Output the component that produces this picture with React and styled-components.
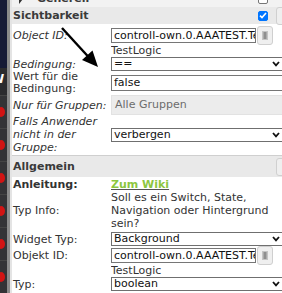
import React from "react";
import styled, { createGlobalStyle } from "styled-components";

const Global = createGlobalStyle`
  html, body {
    margin: 0;
    padding: 0;
    overflow: hidden;
    background: #ffffff;
    font-family: "DejaVu Sans", Verdana, sans-serif;
  }
`;

const Page = styled.div`
  position: relative;
  display: flex;
  width: 282px;
  height: 293px;
  overflow: hidden;
  background: #fff;
`;

const Strip = styled.div`
  flex: 0 0 7px;
  display: flex;
  flex-direction: column;
  overflow: hidden;
`;

const StripTop = styled.div`
  height: 68px;
  background: #161a36;
`;

const StripLetter = styled.div`
  height: 27px;
  background: #2b2b2e;
  color: #fff;
  font-weight: bold;
  font-size: 12px;
  line-height: 12px;
  padding-top: 5px;
  box-sizing: border-box;
  text-indent: -9px;
  white-space: nowrap;
`;

const StripRow = styled.div`
  height: 33px;
  background: #333336;
  border-top: 1px solid #444;
  box-sizing: border-box;
  display: flex;
  align-items: center;
`;

const Dot = styled.div`
  width: 8px;
  height: 10px;
  margin-left: -3px;
  border-radius: 50%;
  background: #d21414;
`;

const Divider = styled.div`
  flex: 0 0 3px;
  background: #8a8a8a;
  border-right: 2px solid #e4e4e4;
`;

const Panel = styled.div`
  flex: 0 0 290px;
  margin-top: -10px;
  color: #333;
  font-size: 11px;
`;

const Head = styled.div`
  display: flex;
  align-items: center;
  height: ${(p) => p.$h}px;
  box-sizing: border-box;
  padding-left: 1px;
  background: ${(p) => (p.$muted ? "#f2f2f2" : "#e9e9e9")};
  border-top: ${(p) => (p.$line ? "1px solid #cfcfcf" : "none")};
  font-weight: bold;
  color: #3a3a3a;
`;

const HeadTitle = styled.span`
  flex: 1;
  display: flex;
  align-items: center;
  gap: 13px;
`;

const Box = styled.span`
  width: 10px;
  height: 10px;
  box-sizing: border-box;
  border-radius: 2px;
  border: 1px solid ${(p) => (p.$on ? "#0075ff" : "#767676")};
  background: ${(p) => (p.$on ? "#0075ff" : "#fff")};
  display: flex;
  align-items: center;
  justify-content: center;
`;

const HeadBtn = styled.span`
  width: 20px;
  height: 18px;
  margin: 0 6px 0 8px;
  box-sizing: border-box;
  border: 1px solid #d0d0d0;
  border-radius: 3px;
  background: #efefef;
  visibility: ${(p) => (p.$hidden ? "hidden" : "visible")};
`;

const Row = styled.div`
  display: grid;
  grid-template-columns: 99px 175px;
  align-items: ${(p) => (p.$top ? "start" : "center")};
  padding: ${(p) => p.$pad || "0"};
`;

const Label = styled.div`
  font-style: ${(p) => (p.$italic ? "italic" : "normal")};
  font-weight: ${(p) => (p.$bold ? "bold" : "normal")};
  line-height: ${(p) => p.$lh || 13}px;
  padding-top: ${(p) => p.$pt || 0}px;
  padding-left: 1px;
  color: #333;
`;

const Value = styled.div`
  min-width: 0;
  overflow: hidden;
`;

const InputLine = styled.div`
  display: flex;
  align-items: center;
  height: 19px;
`;

const Input = styled.div`
  flex: ${(p) => (p.$w ? `0 0 ${p.$w}px` : "1")};
  height: ${(p) => p.$h || 15}px;
  box-sizing: border-box;
  border: 1px solid #767676;
  padding: 0 2px;
  font-size: 11px;
  line-height: ${(p) => (p.$h || 15) - 2}px;
  color: #111;
  white-space: nowrap;
  overflow: hidden;
`;

const PickBtn = styled.div`
  flex: 0 0 16px;
  height: 19px;
  margin-left: 1px;
  box-sizing: border-box;
  border: 1px solid #cfcfcf;
  border-radius: 3px;
  background: #efefef;
  display: flex;
  align-items: center;
  justify-content: center;
`;

const Note = styled.div`
  line-height: 12px;
  color: #333;
  white-space: nowrap;
`;

const Select = styled.div`
  display: flex;
  align-items: center;
  height: 14px;
  box-sizing: border-box;
  border: 1px solid #6f6f6f;
  padding: 0 5px 0 2px;
  color: #111;
  line-height: 12px;
  background: ${(p) => (p.$disabled ? "#ececec" : "#fff")};
  ${(p) =>
    p.$disabled &&
    `
    height: 20px;
    border-color: #e2e2e2;
    color: #6d6d6d;
    padding-left: 3px;
  `}
  span {
    flex: 1;
    white-space: nowrap;
  }
`;

const Link = styled.a`
  color: #8cc63f;
  font-weight: bold;
  text-decoration: underline;
  text-decoration-color: #555;
  line-height: 13px;
`;

const Text = styled.div`
  line-height: 13px;
  color: #333;
`;

const ArrowMark = styled.svg`
  position: absolute;
  left: 0;
  top: 0;
  pointer-events: none;
`;

function Chevron() {
  return (
    <svg width="8" height="6" viewBox="0 0 8 6">
      <path d="M1 1 L4 4.3 L7 1" fill="none" stroke="#111" strokeWidth="1.8" />
    </svg>
  );
}

function Drop({ children, disabled }) {
  return (
    <Select $disabled={disabled}>
      <span>{children}</span>
      {!disabled && <Chevron />}
    </Select>
  );
}

function IdField({ value }) {
  return (
    <>
      <InputLine>
        <Input $w={145}>{value}</Input>
        <PickBtn>
          <svg width="6" height="9" viewBox="0 0 6 9">
            <rect x="0" y="0" width="6" height="9" fill="#c4c4c4" />
            <rect x="1.5" y="1" width="3" height="7" fill="#8f8f8f" />
          </svg>
        </PickBtn>
      </InputLine>
      <Note>TestLogic</Note>
    </>
  );
}

export default function App() {
  const id = "controll-own.0.AAATEST.TestLogic";
  return (
    <Page>
      <Global />
      <Strip>
        <StripTop />
        <StripLetter>W</StripLetter>
        {[0, 1, 2, 3, 4, 5].map((i) => (
          <StripRow key={i}>
            <Dot />
          </StripRow>
        ))}
      </Strip>
      <Divider />
      <Panel>
        <Head $h={17} $muted>
          <HeadTitle>
            <svg width="6" height="10" viewBox="0 0 6 10" style={{ marginLeft: 5 }}>
              <path d="M1 0 L5 5 L1 10 Z" fill="#333" />
            </svg>
            Generell
          </HeadTitle>
          <Box />
          <HeadBtn $hidden />
        </Head>
        <Head $h={17}>
          <HeadTitle>Sichtbarkeit</HeadTitle>
          <Box $on>
            <svg width="8" height="7" viewBox="0 0 8 7">
              <path d="M1 3.6 L3 5.6 L7 1" fill="none" stroke="#fff" strokeWidth="1.6" />
            </svg>
          </Box>
          <HeadBtn />
        </Head>

        <Row $top $pad="2px 0 0 0">
          <Label $italic $pt={3}>Object ID:</Label>
          <Value>
            <IdField value={id} />
          </Value>
        </Row>
        <Row>
          <Label $italic>Bedingung:</Label>
          <Value>
            <Drop>==</Drop>
          </Value>
        </Row>
        <Row>
          <Label $lh={12}>
            Wert für die
            <br />
            Bedingung:
          </Label>
          <Value>
            <Input $h={16}>false</Input>
          </Value>
        </Row>
        <Row>
          <Label $italic>Nur für Gruppen:</Label>
          <Value>
            <Drop disabled>Alle Gruppen</Drop>
          </Value>
        </Row>
        <Row $pad="0 0 1px 0">
          <Label $italic>
            Falls Anwender
            <br />
            nicht in der
            <br />
            Gruppe:
          </Label>
          <Value>
            <Drop>verbergen</Drop>
          </Value>
        </Row>

        <Head $h={22} $line>
          <HeadTitle>Allgemein</HeadTitle>
          <HeadBtn />
        </Head>

        <Row $pad="1px 0 0 0">
          <Label $bold>Anleitung:</Label>
          <Value>
            <Link>Zum Wiki</Link>
          </Value>
        </Row>
        <Row>
          <Label>Typ Info:</Label>
          <Value>
            <Text>
              Soll es ein Switch, State,
              <br />
              Navigation oder Hintergrund
              <br />
              sein?
            </Text>
          </Value>
        </Row>
        <Row $pad="2px 0 0 0">
          <Label>Widget Typ:</Label>
          <Value>
            <Drop>Background</Drop>
          </Value>
        </Row>
        <Row $top>
          <Label $pt={3}>Objekt ID:</Label>
          <Value>
            <IdField value={id} />
          </Value>
        </Row>
        <Row>
          <Label>Typ:</Label>
          <Value>
            <Drop>boolean</Drop>
          </Value>
        </Row>
        <Row $pad="1px 0 0 0">
          <Label />
          <Value>
            <Text>Soll der Wert invertiert werden?</Text>
          </Value>
        </Row>
      </Panel>

      <ArrowMark width="282" height="293" viewBox="0 0 282 293">
        <line x1="62" y1="28" x2="89" y2="57.5" stroke="#000" strokeWidth="2.4" />
        <polygon points="98,67 82,60 92.5,50.5" fill="#000" />
      </ArrowMark>
    </Page>
  );
}
